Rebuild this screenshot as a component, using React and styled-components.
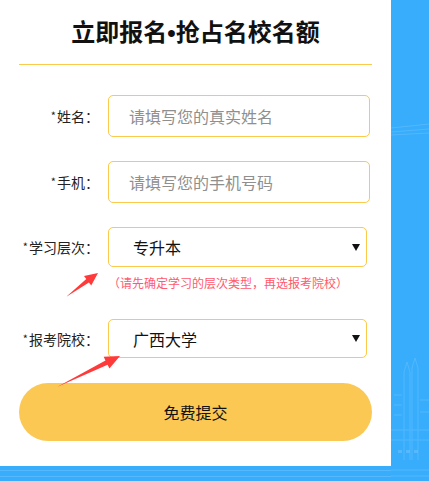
import React from "react";
import styled, { createGlobalStyle } from "styled-components";

const GlobalStyle = createGlobalStyle`
  html, body {
    margin: 0;
    padding: 0;
    background: #37adfc;
    font-family: "Microsoft YaHei", "Noto Sans CJK SC", "Noto Sans", sans-serif;
  }
`;

const Page = styled.div`
  position: relative;
  width: 429px;
  height: 481px;
  overflow: hidden;
  background: #37adfc;
`;

const Panel = styled.div`
  position: relative;
  z-index: 1;
  width: 391px;
  height: 466px;
  background: #fff;
  box-sizing: border-box;
  padding: 14px 19px 0 19px;
  display: flex;
  flex-direction: column;
`;

const Title = styled.h2`
  margin: 0;
  height: 34px;
  font-size: 24px;
  line-height: 34px;
  font-weight: 700;
  color: #111;
  text-align: center;
`;

const Dot = styled.span`
  font-family: "Liberation Sans", Arial, sans-serif;
  font-weight: 700;
  line-height: 1;
`;

const Divider = styled.div`
  height: 1px;
  background: #fbc94c;
  margin-top: 16px;
`;

const Row = styled.div`
  display: grid;
  grid-template-columns: 89px 1fr;
  align-items: center;
  margin-top: ${(p) => p.$top}px;
`;

const Label = styled.label`
  text-align: right;
  padding-right: 9px;
  font-size: 14px;
  color: #222;
  white-space: nowrap;

  sup {
    font-size: 11px;
    vertical-align: 2px;
    margin-right: 1px;
  }
`;

const Input = styled.input`
  box-sizing: border-box;
  width: ${(p) => p.$w}px;
  height: 42px;
  border: 1px solid #fbc94c;
  border-radius: 5px;
  padding: 0 20px;
  font-family: inherit;
  font-size: 16px;
  color: #333;
  outline: none;

  &::placeholder {
    color: #8f8f8f;
  }
`;

const SelectBox = styled.div`
  box-sizing: border-box;
  width: 259px;
  height: ${(p) => p.$h}px;
  border: 1px solid #fbc94c;
  border-radius: 5px;
  display: flex;
  align-items: center;
  padding: 0 6px 0 0;
`;

const Select = styled.select`
  flex: 1;
  appearance: none;
  -webkit-appearance: none;
  border: none;
  background: transparent;
  height: 100%;
  padding: 0 0 0 24px;
  font-family: inherit;
  font-size: 16px;
  color: #111;
  outline: none;
`;

const Caret = styled.svg`
  display: block;
`;

const Hint = styled.p`
  margin: 6px 0 0 89px;
  font-size: 12px;
  line-height: 20px;
  color: #ff5a6e;
`;

const Submit = styled.button`
  margin-top: 25px;
  height: 58px;
  border: none;
  border-radius: 29px;
  background: #fbc854;
  font-family: inherit;
  font-size: 16px;
  color: #111;
  cursor: pointer;
`;

const Overlay = styled.svg`
  position: absolute;
  left: 0;
  top: 0;
  z-index: 2;
  pointer-events: none;
`;

const Backdrop = styled.svg`
  position: absolute;
  left: 0;
  top: 0;
  z-index: 0;
`;

function arrowPoints(tx, ty, hx, hy, headLen, hw, w) {
  const len = Math.hypot(hx - tx, hy - ty);
  const dx = (hx - tx) / len;
  const dy = (hy - ty) / len;
  const nx = -dy;
  const ny = dx;
  const bx = hx - dx * headLen;
  const by = hy - dy * headLen;
  const pts = [
    [tx, ty],
    [bx + nx * w, by + ny * w],
    [bx + nx * hw, by + ny * hw],
    [hx, hy],
    [bx - nx * hw, by - ny * hw],
    [bx - nx * w, by - ny * w],
  ];
  return pts.map((p) => p.join(",")).join(" ");
}

const Arrow = ({ tail, head, headLen, hw, w }) => (
  <polygon
    points={arrowPoints(tail[0], tail[1], head[0], head[1], headLen, hw, w)}
    fill="#ff3a3a"
  />
);

const CaretIcon = () => (
  <Caret width="8" height="7" viewBox="0 0 8 7">
    <path d="M0 0 H8 L4 7 Z" fill="#111" />
  </Caret>
);

export default function App() {
  return (
    <>
      <GlobalStyle />
      <Page>
        <Backdrop width="429" height="481" viewBox="0 0 429 481">
          <g stroke="#7cc8ff" strokeWidth="1" fill="none" opacity="0.4">
            <path d="M391 128 L429 124 M391 132 L429 129 M391 135 L429 133" />
            <path d="M404 460 V372 L407 362 L410 372 V460 M412 460 V368 L415 358 L418 368 V460" />
            <path d="M394 395 H402 M394 405 H402 M394 415 H402 M420 400 H429 M420 412 H429" />
            <path d="M391 430 H429 M391 440 H429" />
            <path d="M391 470 H429 M391 476 H429" />
          </g>
          <g fill="#7cc8ff" opacity="0.45">
            <rect x="398" y="450" width="4" height="3" />
            <rect x="406" y="450" width="4" height="3" />
            <rect x="414" y="450" width="4" height="3" />
            <rect x="0" y="470" width="391" height="1" />
            <rect x="0" y="476" width="391" height="1" />
          </g>
        </Backdrop>
        <Panel>
          <Title>立即报名<Dot>•</Dot>抢占名校名额</Title>
          <Divider />
          <Row $top={30}>
            <Label><sup>*</sup>姓名：</Label>
            <Input $w={262} placeholder="请填写您的真实姓名" />
          </Row>
          <Row $top={24}>
            <Label><sup>*</sup>手机：</Label>
            <Input $w={262} placeholder="请填写您的手机号码" />
          </Row>
          <Row $top={24}>
            <Label><sup>*</sup>学习层次：</Label>
            <SelectBox $h={40}>
              <Select defaultValue="专升本">
                <option>专升本</option>
                <option>高起专</option>
                <option>高起本</option>
              </Select>
              <CaretIcon />
            </SelectBox>
          </Row>
          <Hint>（请先确定学习的层次类型，再选报考院校）</Hint>
          <Row $top={26}>
            <Label><sup>*</sup>报考院校：</Label>
            <SelectBox $h={39}>
              <Select defaultValue="广西大学">
                <option>广西大学</option>
              </Select>
              <CaretIcon />
            </SelectBox>
          </Row>
          <Submit>免费提交</Submit>
        </Panel>
        <Overlay width="429" height="481" viewBox="0 0 429 481">
          <Arrow tail={[66, 297]} head={[98, 273]} headLen={13} hw={6} w={2.2} />
          <Arrow tail={[57, 387]} head={[120, 356]} headLen={15} hw={6.5} w={2.4} />
        </Overlay>
      </Page>
    </>
  );
}
